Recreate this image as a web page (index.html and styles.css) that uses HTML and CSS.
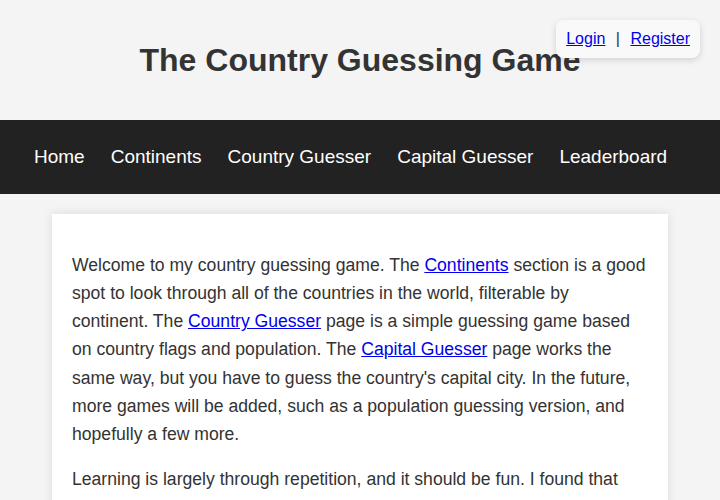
FILE: index.html
```html
<!DOCTYPE html>
<html lang="en">
<head>
  <meta charset="UTF-8">
  <meta name="viewport" content="width=device-width, initial-scale=1.0">
  <title>The Country Guessing Game</title>
  <link rel="stylesheet" href="styles.css">
</head>
<body>
  <header class="site-header">
    <h1>The Country Guessing Game</h1>
    <div class="auth">
      <a href="#">Login</a>
      <span class="sep">|</span>
      <a href="#">Register</a>
    </div>
  </header>

  <nav class="main-nav">
    <a href="#">Home</a>
    <a href="#">Continents</a>
    <a href="#">Country Guesser</a>
    <a href="#">Capital Guesser</a>
    <a href="#">Leaderboard</a>
  </nav>

  <main class="content">
    <p>Welcome to my country guessing game. The <a href="#">Continents</a> section is a good spot to look through all of the countries in the world, filterable by continent. The <a href="#">Country Guesser</a> page is a simple guessing game based on country flags and population. The <a href="#">Capital Guesser</a> page works the same way, but you have to guess the country's capital city. In the future, more games will be added, such as a population guessing version, and hopefully a few more.</p>
    <p>Learning is largely through repetition, and it should be fun. I found that playing small guessing games every day was the easiest way to remember where every country is, what its flag looks like and what its capital is called.</p>
  </main>
</body>
</html>
```

FILE: styles.css
```css
body {
  font-family: 'Liberation Sans', Arial, sans-serif;
  background: #f4f4f4;
  color: #333;
  margin: 0;
  padding: 0;
}
.site-header {
  position: relative;
  text-align: center;
  padding: 20px;
}
.site-header h1 {
  font-size: 32px;
  margin: 21.5px 0;
  line-height: 37px;
}
.auth {
  position: absolute;
  top: 20px;
  right: 20px;
  background: #f9f9f9;
  padding: 10px;
  border-radius: 8px;
  box-shadow: 0 2px 6px rgba(0, 0, 0, 0.15);
  font-size: 16px;
  line-height: 18px;
}
.auth a {
  color: #0000ee;
}
.auth .sep {
  margin: 0 6px;
}
.main-nav {
  display: flex;
  background: #222;
  padding: 0 21px;
}
.main-nav a {
  color: white;
  text-decoration: none;
  font-size: 19px;
  line-height: 22px;
  padding: 26px 13px;
}
.content {
  width: 80%;
  margin: 20px auto;
  padding: 20px;
  background: white;
  box-shadow: 0 0 10px rgba(0, 0, 0, 0.1);
}
.content p {
  font-size: 1.1rem;
  line-height: 1.6;
  margin: 17px 0;
}
.content a {
  color: #0000ee;
}
```
